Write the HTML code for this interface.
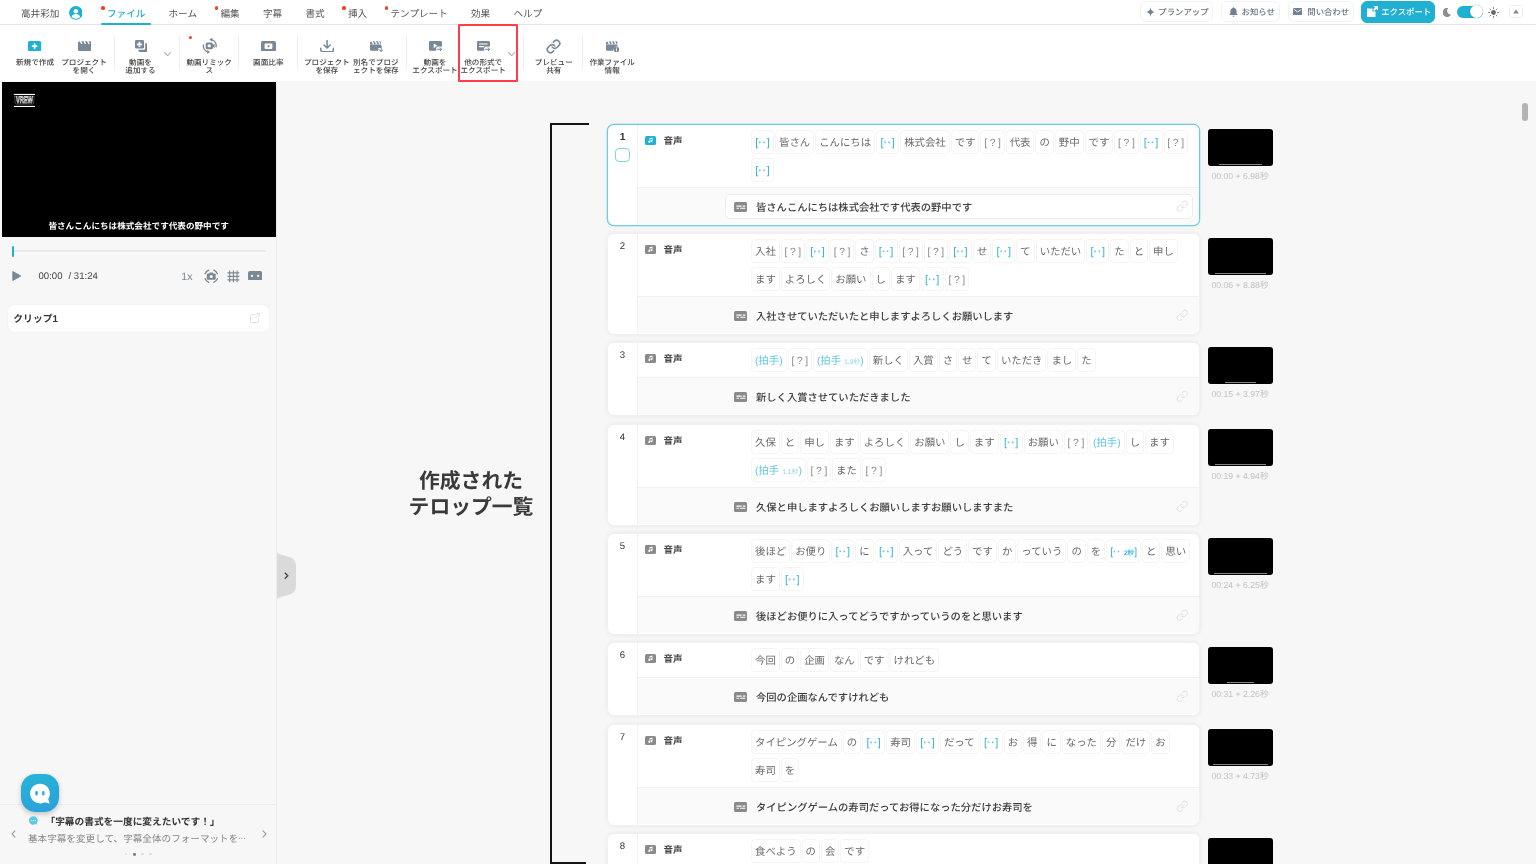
<!DOCTYPE html>
<html lang="ja">
<head>
<meta charset="utf-8">
<title>Vrew</title>
<style>
*{box-sizing:border-box;margin:0;padding:0}
html,body{width:1536px;height:864px;overflow:hidden;background:#f7f7f7}
body{font-family:"Liberation Sans","Noto Sans CJK JP",sans-serif;color:#333;position:relative;font-size:10px;text-rendering:geometricPrecision}
#app{position:absolute;left:0;top:0;width:1536px;height:864px;will-change:transform}
.abs{position:absolute}
/* ---------- menu bar ---------- */
#menubar{position:absolute;left:0;top:0;width:1536px;height:25px;background:#fff;border-bottom:1px solid #e4e4e4}
#menubar .mi{position:absolute;top:2px;height:24px;line-height:25.8px;font-size:9.6px;color:#555;white-space:nowrap}
#menubar .mi.act{color:#1fb0d2;font-weight:500}
#menubar .dot{position:absolute;width:3.7px;height:3.7px;border-radius:50%;background:#f23f26;top:6px}
#menubar .ul{position:absolute;left:101px;top:23.4px;width:50px;height:1.7px;background:#1fb0d2;border-radius:1px}
.tbtn{position:absolute;top:1px;height:21px;border:1px solid #f2f2f2;border-radius:6px;background:#fff;font-size:8.4px;color:#6a757e;font-weight:500;line-height:20.6px;white-space:nowrap}
.tbtn span{position:absolute;top:0}
/* ---------- toolbar ---------- */
#toolbar{position:absolute;left:0;top:25px;width:1536px;height:56px;background:#fff}
.tl{position:absolute;top:34.3px;font-size:7.6px;line-height:8px;color:#444;font-weight:500;text-align:center;white-space:nowrap;transform:translateX(-50%)}
.tsep{position:absolute;top:11.4px;width:1px;height:34px;background:#efefef}
.ticon{position:absolute}
/* ---------- left panel ---------- */
#left{position:absolute;left:0;top:81px;width:277px;height:783px;background:#f7f7f7;border-right:1px solid #ececec}
/* ---------- cards ---------- */
.card{position:absolute;left:607px;width:593px;background:#fff;border:1px solid #f0f0f0;border-radius:7px;box-shadow:0 0 5px rgba(0,0,0,.07);overflow:hidden}
.card.sel{border-color:#6ccbe1;box-shadow:0 0 0 .25px #6ccbe1,0 0 5px rgba(0,0,0,.05)}
.card .num{position:absolute;left:0;top:0;width:30px;bottom:0;border-right:1px solid #f2f2f2;text-align:center;font-size:9.6px;color:#333;padding-top:7.1px;line-height:12px}
.card .words{margin-left:30px;padding:5px 0 0 113px;background:#fff;position:relative}
.card .sub{margin-left:30px;height:37px;background:#fafafa;border-top:1px solid #f1f1f1;position:relative}
.card .aud{position:absolute;left:7.2px;top:11px;width:11px;height:9px;background:#8a8a8a;border-radius:1.5px}
.card.sel .aud{background:#1fb0d2}
.card .aul{position:absolute;left:25.6px;top:8.5px;font-size:9.5px;line-height:16px;color:#484848;font-weight:700}
.chips{font-size:0;line-height:0}
.c{display:inline-block;height:24px;line-height:25px;font-size:10.4px;color:#6a6a6a;border:1px solid #f5f5f5;border-radius:4px;padding:0 3px;margin:0 1px 4px 0;vertical-align:top;white-space:nowrap;background:#fff;text-align:center}
.c.q{color:#8a8a8a;width:24.2px;padding:0;letter-spacing:2.6px;text-indent:2.6px}
.c.s{color:#2fb4d3;width:23px;padding:0;font-size:11px;line-height:25.4px}
.c.s i,.c.sx i{font-style:normal;color:#74c6dc;letter-spacing:.5px;font-weight:700}
.c.sx{color:#2fb4d3}
.c.p{color:#62c8e0}
.c small{font-size:6.8px;font-weight:400;color:#8fd6e8}
.c.sx small{font-weight:700;color:#3fb9d6;font-size:6.6px}
.sub .sic{position:absolute;left:95.6px;top:13.8px;width:13.8px;height:9.8px;background:#8a8a8a;border-radius:1.5px}
.sub .st{position:absolute;left:118px;top:2.6px;line-height:36px;font-size:10.3px;color:#3c3c3c;font-weight:500;white-space:nowrap}
.sub .lk{position:absolute;right:10.5px;top:11.5px;width:12.5px;height:12.5px}
.thumb{position:absolute;left:1207.5px;width:65.8px;height:37px;background:#000;border-radius:3px}
.thumb b{position:absolute;bottom:1.5px;height:1px;background:#858585}
.ttime{position:absolute;left:1190px;width:100px;text-align:center;font-size:8.7px;color:#c2c2c2;line-height:10px;white-space:nowrap}
</style>
</head>
<body>
<div id="app">
<!-- ================= MENU BAR ================= -->
<div id="menubar">
  <div class="mi" style="left:21px">高井彩加</div>
  <svg class="abs" style="left:68.5px;top:6.2px" width="13.7" height="13.7" viewBox="0 0 14 14"><circle cx="7" cy="7" r="7" fill="#1fb0d2"/><circle cx="7" cy="5.3" r="2.3" fill="#fff"/><path d="M2.6 11.2c.6-2 2.3-2.9 4.4-2.9s3.8.9 4.4 2.9A6 6 0 0 1 7 13a6 6 0 0 1-4.4-1.8z" fill="#fff"/></svg>
  <div class="dot" style="left:101px"></div>
  <div class="mi act" style="left:107px">ファイル</div>
  <div class="ul"></div>
  <div class="mi" style="left:168.5px">ホーム</div>
  <div class="dot" style="left:214.5px"></div>
  <div class="mi" style="left:220.5px">編集</div>
  <div class="mi" style="left:263px">字幕</div>
  <div class="mi" style="left:305.5px">書式</div>
  <div class="dot" style="left:342px"></div>
  <div class="mi" style="left:348px">挿入</div>
  <div class="dot" style="left:384.5px"></div>
  <div class="mi" style="left:390.5px">テンプレート</div>
  <div class="mi" style="left:471px">効果</div>
  <div class="mi" style="left:513.5px">ヘルプ</div>

  <div class="tbtn" style="left:1140.3px;width:72.7px">
    <svg class="abs" style="left:5px;top:4.5px" width="9" height="10" viewBox="0 0 9 10"><path d="M4.5 0C4.9 3 5.6 4.2 9 5 5.6 5.8 4.9 7 4.5 10 4.1 7 3.4 5.8 0 5 3.4 4.2 4.1 3 4.5 0z" fill="#718190"/></svg>
    <span style="left:17px">プランアップ</span></div>
  <div class="tbtn" style="left:1220.5px;width:59px">
    <svg class="abs" style="left:7px;top:4.5px" width="9" height="10" viewBox="0 0 9 10"><path d="M4.5 0.3c.5 0 .8.3.8.7 1.5.400 2.3 1.6 2.3 3.2v2.3l1 1.1v.5H.4v-.5l1-1.1V4.2c0-1.6.8-2.8 2.3-3.2 0-.4.3-.7.8-.7zM3.5 8.7h2a1 1 0 0 1-2 0z" fill="#718190"/></svg>
    <span style="left:20.1px">お知らせ</span></div>
  <div class="tbtn" style="left:1287.5px;width:66px">
    <svg class="abs" style="left:4.5px;top:5.8px" width="9.4" height="7.2" viewBox="0 0 9 7"><rect width="9" height="7" rx="1" fill="#718190"/><path d="M1 1.5l3.5 2.3L8 1.5" stroke="#fff" stroke-width=".9" fill="none"/></svg>
    <span style="left:18.8px">問い合わせ</span></div>
  <div class="tbtn" style="left:1361px;width:73.5px;top:0.5px;height:22px;background:#1fb0d2;border-color:#1fb0d2;color:#fff;line-height:21.6px">
    <svg class="abs" style="left:5px;top:4.5px" width="11" height="11" viewBox="0 0 11 11"><path d="M0 2.5h5.5v3h3V11H0z" fill="#fff"/><path d="M6.5 0H11v4.5L9.4 2.9 7.3 5 6 3.7l2.1-2.1z" fill="#fff"/></svg>
    <span style="left:19.2px">エクスポート</span></div>
  <svg class="abs" style="left:1443px;top:7.5px" width="8" height="9" viewBox="0 0 8 9"><path d="M5.3 0A4.5 4.5 0 1 0 8 6.8 4 4 0 0 1 5.3 0z" fill="#8c8c8c"/></svg>
  <div class="abs" style="left:1456.5px;top:5.5px;width:26.5px;height:12px;border-radius:6px;background:#1fb0d2"></div>
  <div class="abs" style="left:1470px;top:5px;width:13px;height:13px;border-radius:50%;background:#fff;box-shadow:0 0 1.5px rgba(0,0,0,.35)"></div>
  <svg class="abs" style="left:1488px;top:6.5px" width="11" height="11" viewBox="0 0 11 11"><circle cx="5.5" cy="5.5" r="2.4" fill="#666"/><g stroke="#666" stroke-width=".9" stroke-linecap="round"><path d="M5.5.6v.9M5.5 9.5v.9M.6 5.5h.9M9.5 5.5h.9M2 2l.6.6M8.4 8.4l.6.6M2 9l.6-.600M8.4 2.6L9 2"/></g></svg>
  <div class="abs" style="left:1509px;top:5px;width:13.5px;height:13px;border:1px solid #f0f0f0;border-radius:2px;background:#fff"></div>
  <svg class="abs" style="left:1513px;top:9px" width="6" height="5" viewBox="0 0 6 5"><path d="M3 .5L5.8 4.5H.2z" fill="#7a8894"/></svg>
</div>
<!-- ================= TOOLBAR ================= -->
<div id="toolbar">
  <!-- 1 new -->
  <svg class="ticon" style="left:28.4px;top:15.8px" width="13.2" height="10.3" viewBox="0 0 13.2 10.3"><rect width="13.2" height="10.3" rx="1.6" fill="#1fb0d2"/><path d="M6.6 3.2v3.9M4.65 5.15h3.9" stroke="#fff" stroke-width="1.8" stroke-linecap="round"/></svg>
  <div class="tl" style="left:35px">新規で作成</div>
  <!-- 2 open -->
  <svg class="ticon" style="left:78px;top:16px" width="13.2" height="10" viewBox="0 0 13.2 10"><path d="M0 3h13.2v5.8a1.2 1.2 0 0 1-1.2 1.2H1.2A1.2 1.2 0 0 1 0 8.8z" fill="#788896"/><path d="M0 3.2V1.5L1.7.2l1.5 3zM3.3.2h2.1l1.5 3H4.8zM6.9.2H9l1.5 3H8.4zM10.5.2H12a1.2 1.2 0 0 1 1.2 1.2v1.8h-1.2z" fill="#788896"/></svg>
  <div class="tl" style="left:84px">プロジェクト<br>を開く</div>
  <div class="tsep" style="left:113.8px"></div>
  <!-- 3 add video -->
  <svg class="ticon" style="left:134.5px;top:15px" width="12.6" height="12" viewBox="0 0 12.6 12"><rect x="0" y="0" width="9" height="8.6" rx="1.4" fill="#788896"/><path d="M4.5 1.7v5.2M1.9 4.3h5.2" stroke="#fff" stroke-width="1.7"/><path d="M10.2 3.2h.9a1.5 1.5 0 0 1 1.5 1.5v5.8a1.5 1.5 0 0 1-1.5 1.5H5a1.5 1.5 0 0 1-1.5-1.5v-.7h5.2a1.5 1.5 0 0 0 1.5-1.5z" fill="#788896"/></svg>
  <div class="tl" style="left:140.5px">動画を<br>追加する</div>
  <svg class="ticon" style="left:163.8px;top:26.5px" width="7.2" height="4.4" viewBox="0 0 7.2 4.4"><path d="M.6.6l3 3 3-3" stroke="#b9b9b9" stroke-width="1.3" fill="none" stroke-linecap="round" stroke-linejoin="round"/></svg>
  <div class="tsep" style="left:179px"></div>
  <!-- 4 remix -->
  <div class="abs" style="left:188.5px;top:10.5px;width:3.6px;height:3.6px;border-radius:50%;background:#f23f26"></div>
  <svg class="ticon" style="left:201.5px;top:13px" width="15.5" height="15.5" viewBox="0 0 15.5 15.5"><rect x="3.7" y="4.4" width="7.2" height="6.8" rx="1.5" fill="#788896"/><path d="M10 7.2l2.6-1.5v4.3L10 8.5z" fill="#788896"/><rect x="5.7" y="6.4" width="3" height="2.8" rx=".6" fill="#fff"/><path d="M9.41 1.57A6.4 6.4 0 0 1 14.09 8.64" stroke="#788896" stroke-width="1.4" fill="none" stroke-linecap="round"/><path d="M6.09 13.93A6.4 6.4 0 0 1 1.41 6.86" stroke="#788896" stroke-width="1.4" fill="none" stroke-linecap="round"/><path d="M10.3 -.3L7.3 1.5l3 1.9z" fill="#788896"/><path d="M5.2 15.8l3-1.8-3-1.9z" fill="#788896"/></svg>
  <div class="tl" style="left:209.2px">動画リミック<br>ス</div>
  <div class="tsep" style="left:238px"></div>
  <!-- 5 aspect -->
  <svg class="ticon" style="left:260.8px;top:15.5px" width="15" height="10.6" viewBox="0 0 15 10.6"><rect width="15" height="10.6" rx="1.8" fill="#788896"/><rect x="3.6" y="2.6" width="7.8" height="5.4" rx="1.2" fill="#fff"/><circle cx="7.5" cy="5.3" r="1.1" fill="#788896"/></svg>
  <div class="tl" style="left:268.3px">画面比率</div>
  <div class="tsep" style="left:297.3px"></div>
  <!-- 6 save -->
  <svg class="ticon" style="left:320px;top:14.5px" width="14.2" height="12.4" viewBox="0 0 14.2 12.4"><path d="M7.1.5v7.2M4 5l3.1 3L10.2 5" stroke="#788896" stroke-width="1.5" fill="none" stroke-linecap="round" stroke-linejoin="round"/><path d="M.8 8.3v1.7a1.7 1.7 0 0 0 1.7 1.7h9.2a1.7 1.7 0 0 0 1.7-1.7V8.3" stroke="#788896" stroke-width="1.5" fill="none" stroke-linecap="round"/></svg>
  <div class="tl" style="left:326.8px">プロジェクト<br>を保存</div>
  <!-- 7 save as -->
  <svg class="ticon" style="left:369.8px;top:15.5px" width="13.4" height="11.4" viewBox="0 0 13.4 11.4"><path d="M0 3.6h11v3.3H8.3v2.9H1.2A1.2 1.2 0 0 1 0 8.6z" fill="#788896"/><path d="M0 3.2V1.6L1.3.3l1.5 2.9zM2.8.3h1.7L6 3.2H4.3zM6 .3h1.7l1.5 2.9H7.5zM9.2.3h.7A1.1 1.1 0 0 1 11 1.4v1.8h-.3z" fill="#788896"/><path d="M11.2 5v5.3M9.4 8.7l1.8 1.9 1.8-1.9" stroke="#788896" stroke-width="1" fill="none" stroke-linecap="round" stroke-linejoin="round"/></svg>
  <div class="tl" style="left:375.8px">別名でプロジ<br>ェクトを保存</div>
  <div class="tsep" style="left:406px"></div>
  <!-- 8 export video -->
  <svg class="ticon" style="left:429px;top:15.6px" width="13.4" height="10.8" viewBox="0 0 13.4 10.8"><path d="M1.4 0h10.2A1.4 1.4 0 0 1 13 1.4v4.2H8.6L7 7.3v2.5H1.4A1.4 1.4 0 0 1 0 8.4v-7A1.4 1.4 0 0 1 1.4 0z" fill="#788896"/><path d="M4.7 2.4l3.6 2.4-3.6 2.4z" fill="#fff"/><path d="M8 8.3h4.6M10.8 6.4l1.9 1.9-1.9 1.9" stroke="#788896" stroke-width="1" fill="none" stroke-linecap="round" stroke-linejoin="round"/></svg>
  <div class="tl" style="left:435px">動画を<br>エクスポート</div>
  <!-- 9 export other -->
  <svg class="ticon" style="left:477px;top:15.6px" width="13.4" height="10.8" viewBox="0 0 13.4 10.8"><path d="M1.4 0h10.2A1.4 1.4 0 0 1 13 1.4v4.2H8.6L7 7.3v2.5H1.4A1.4 1.4 0 0 1 0 8.4v-7A1.4 1.4 0 0 1 1.4 0z" fill="#788896"/><path d="M2.5 3h7.6M2.5 5.6h4.3" stroke="#fff" stroke-width="1.2" stroke-linecap="round"/><path d="M8 8.3h4.6M10.8 6.4l1.9 1.9-1.9 1.9" stroke="#788896" stroke-width="1" fill="none" stroke-linecap="round" stroke-linejoin="round"/></svg>
  <div class="tl" style="left:483.2px">他の形式で<br>エクスポート</div>
  <svg class="ticon" style="left:508px;top:26.5px" width="7.2" height="4.4" viewBox="0 0 7.2 4.4"><path d="M.6.6l3 3 3-3" stroke="#b9b9b9" stroke-width="1.3" fill="none" stroke-linecap="round" stroke-linejoin="round"/></svg>
  <div class="tsep" style="left:523.2px"></div>
  <!-- 10 link -->
  <svg class="ticon" style="left:545.8px;top:13.8px" width="15" height="15" viewBox="0 0 24 24"><g fill="none" stroke="#788896" stroke-width="2.5" stroke-linecap="round" stroke-linejoin="round"><path d="M10 13a5 5 0 0 0 7.54.540l3-3a5 5 0 0 0-7.07-7.07l-1.72 1.71"/><path d="M14 11a5 5 0 0 0-7.54-.540l-3 3a5 5 0 0 0 7.07 7.07l1.71-1.71"/></g></svg>
  <div class="tl" style="left:553.8px">プレビュー<br>共有</div>
  <div class="tsep" style="left:582.3px"></div>
  <!-- 11 info -->
  <svg class="ticon" style="left:605.8px;top:15.5px" width="13.4" height="11.4" viewBox="0 0 13.4 11.4"><path d="M0 3.6h11.4v2.1a3.3 3.3 0 0 0-3.9 4.1H1.2A1.2 1.2 0 0 1 0 8.6z" fill="#788896"/><path d="M0 3.2V1.6L1.3.3l1.5 2.9zM2.8.3h1.7L6 3.2H4.3zM6 .3h1.7l1.5 2.9H7.5zM9.2.3h1a1.2 1.2 0 0 1 1.2 1.2v1.7h-.7z" fill="#788896"/><circle cx="10.5" cy="8.5" r="2.7" fill="#788896"/><path d="M10.5 8.2v1.7M10.5 6.9v.3" stroke="#fff" stroke-width=".9" stroke-linecap="round"/></svg>
  <div class="tl" style="left:612.2px">作業ファイル<br>情報</div>
  <!-- highlight -->
  <div class="abs" style="left:458px;top:-1.2px;width:60px;height:58px;border:2px solid #ff3d4a;border-radius:1px"></div>
</div>
<!-- ================= LEFT PANEL ================= -->
<div id="left">
  <div class="abs" style="left:1.5px;top:1.2px;width:274.3px;height:155.3px;background:#000"></div>
  <svg class="abs" style="left:13px;top:11px" width="24" height="16" viewBox="0 0 24 16"><rect x=".8" y="1.9" width="21.2" height="1.1" fill="#fff"/><rect x=".8" y="13.9" width="21.2" height="1.1" fill="#fff"/><path d="M1.6 4.2H21.2L20.6 11.3Q20.5 12.1 19.7 12.1H3.1Q2.3 12.1 2.2 11.3z" fill="none" stroke="#999" stroke-width=".45"/><text x="2.9" y="11.4" font-family="Liberation Sans, sans-serif" font-weight="700" font-size="9.2" textLength="17" lengthAdjust="spacingAndGlyphs" fill="#000" stroke="#fff" stroke-width=".7">VREW</text></svg>
  <div class="abs" style="left:1.5px;top:138px;width:274.3px;text-align:center;color:#fff;font-weight:700;font-size:8.6px;line-height:14px;white-space:nowrap">皆さんこんにちは株式会社です代表の野中です</div>
  <!-- progress -->
  <div class="abs" style="left:13px;top:169.2px;width:253px;height:1.6px;background:#e9e9e9"></div>
  <div class="abs" style="left:11.7px;top:164.5px;width:2.7px;height:11px;background:#1fb0d2;border-radius:1px"></div>
  <!-- controls -->
  <svg class="abs" style="left:12px;top:189.5px" width="9.5" height="10" viewBox="0 0 9.5 11" preserveAspectRatio="none"><path d="M.8.6l8 4.9-8 4.9z" fill="#7a8894" stroke="#7a8894" stroke-width="1" stroke-linejoin="round"/></svg>
  <div class="abs" style="left:38.5px;top:189.2px;font-size:9.6px;line-height:14px;color:#444;white-space:nowrap">00:00</div>
  <div class="abs" style="left:68.5px;top:189.2px;font-size:9.6px;line-height:14px;color:#444;white-space:nowrap">/ 31:24</div>
  <div class="abs" style="left:181.3px;top:189.3px;font-size:10.6px;line-height:14px;color:#7a8894;white-space:nowrap">1x</div>
  <svg class="abs" style="left:204px;top:187.5px" width="14.5" height="14.5" viewBox="0 0 14.5 14.5"><path d="M13.37 9.72A6.6 6.6 0 0 1 9.72 13.37 M4.78 13.37A6.6 6.6 0 0 1 1.13 9.72 M1.13 4.78A6.6 6.6 0 0 1 4.78 1.13 M9.72 1.13A6.6 6.6 0 0 1 13.37 4.78" fill="none" stroke="#7a8894" stroke-width="1.3" stroke-linecap="round"/><path d="M5.8 3.5h2.9l.7 1h1.3a1 1 0 0 1 1 1v4.2a1 1 0 0 1-1 1H3.8a1 1 0 0 1-1-1V5.5a1 1 0 0 1 1-1h1.3z" fill="#7a8894"/><circle cx="7.25" cy="7.5" r="1.6" fill="#f7f7f7"/></svg>
  <svg class="abs" style="left:226.8px;top:188.8px" width="12.8" height="12.8" viewBox="0 0 12.8 12.8"><path d="M2.7 .5v11.8M6.4 .5v11.8M10.1 .5v11.8M.5 2.9h11.8M.5 6.4h11.8M.5 9.9h11.8" stroke="#7a8894" stroke-width="1.1"/></svg>
  <svg class="abs" style="left:248px;top:189.7px" width="14.2" height="9.6" viewBox="0 0 14.2 9.6"><rect width="14.2" height="9.6" rx="2" fill="#7a8894"/><circle cx="4" cy="4.9" r="1.15" fill="#f7f7f7"/><circle cx="10.2" cy="4.9" r="1.15" fill="#f7f7f7"/></svg>
  <!-- clip card -->
  <div class="abs" style="left:8px;top:223.5px;width:261px;height:27px;background:#fff;border-radius:7px;box-shadow:0 0 2px rgba(0,0,0,.05)"></div>
  <div class="abs" style="left:13.3px;top:232px;font-size:9.8px;font-weight:700;line-height:14px;color:#333;white-space:nowrap">クリップ1</div>
  <svg class="abs" style="left:249.5px;top:232px" width="10.5" height="10" viewBox="0 0 10.5 10"><path d="M5 1.5H1.5a1 1 0 0 0-1 1v6a1 1 0 0 0 1 1h6a1 1 0 0 0 1-1V5.5M6.5.5H10V4M10 .5L5.5 5" fill="none" stroke="#dcdcdc" stroke-width=".9"/></svg>
  <!-- bottom tip -->
  <div class="abs" style="left:0;top:722.7px;width:276px;height:1px;background:#ececec"></div>
  <div class="abs" style="left:20.6px;top:693.3px;width:38.4px;height:37.6px;border-radius:14.5px;background:linear-gradient(160deg,#29b2d8 10%,#2aa0da 95%);box-shadow:0 2px 5px rgba(0,0,0,.22)"></div>
  <svg class="abs" style="left:27.5px;top:700.5px" width="24" height="24" viewBox="0 0 24 24"><path d="M12 1.8c5.5 0 9.9 4.3 9.9 9.8 0 2-.6 3.9-1.7 5.5l1.5 4.6-4.9-1.5a10 10 0 0 1-4.8 1.2c-5.5 0-9.9-4.3-9.9-9.8S6.5 1.8 12 1.8z" fill="#fff"/><rect x="7.4" y="9" width="2.3" height="4.6" rx="1.15" fill="#2aa6d8"/><rect x="14.2" y="9" width="2.3" height="4.6" rx="1.15" fill="#2aa6d8"/></svg>
  <svg class="abs" style="left:29px;top:734.5px" width="9" height="9" viewBox="0 0 9 9"><path d="M4.5.3a4.1 4.1 0 0 1 3.3 6.6l.6 1.7-1.9-.6A4.2 4.2 0 1 1 4.5.3z" fill="#5cc8e2"/><circle cx="2.8" cy="4.5" r=".55" fill="#fff"/><circle cx="4.5" cy="4.5" r=".55" fill="#fff"/><circle cx="6.2" cy="4.5" r=".55" fill="#fff"/></svg>
  <div class="abs" style="left:45.5px;top:735.3px;font-size:9.7px;font-weight:700;line-height:14px;color:#333;white-space:nowrap">「字幕の書式を一度に変えたいです！」</div>
  <div class="abs" style="left:28px;top:749.8px;font-size:9.6px;line-height:14px;color:#888;white-space:nowrap">基本字幕を変更して、字幕全体のフォーマットを<span style="display:inline-block;width:9px;transform:scaleX(.8);transform-origin:0 50%;font-family:'Noto Sans CJK JP',sans-serif">…</span></div>
  <svg class="abs" style="left:10.5px;top:749px" width="5" height="8" viewBox="0 0 5 8"><path d="M4.2.7L1 4l3.2 3.3" stroke="#999" stroke-width="1.1" fill="none"/></svg>
  <svg class="abs" style="left:261.5px;top:749px" width="5" height="8" viewBox="0 0 5 8"><path d="M.8.7L4 4 .8 7.3" stroke="#999" stroke-width="1.1" fill="none"/></svg>
  <div class="abs" style="left:125px;top:772px;width:2.4px;height:2.4px;border-radius:50%;background:#ddd"></div>
  <div class="abs" style="left:133px;top:771.8px;width:2.8px;height:2.8px;border-radius:50%;background:#777"></div>
  <div class="abs" style="left:141.2px;top:772px;width:2.4px;height:2.4px;border-radius:50%;background:#ddd"></div>
  <div class="abs" style="left:149.2px;top:772px;width:2.4px;height:2.4px;border-radius:50%;background:#ddd"></div>
</div>
<!-- collapse tab -->
<svg class="abs" style="left:277px;top:552px" width="19.5" height="47.5" viewBox="0 0 19.5 47.5"><path d="M0 0C1.5 5 19 1.5 19 13.5V34C19 46 1.5 42.5 0 47.5z" fill="#dadada"/><path d="M7.8 20.8L10.8 23.8 7.8 26.8" stroke="#444" stroke-width="1.3" fill="none"/></svg>
<!-- ================= BRACKET + LABEL ================= -->
<div class="abs" style="left:550px;top:123px;width:39px;height:760px;border-left:2px solid #151515;border-top:2px solid #151515"></div>
<div class="abs" style="left:550px;top:861.6px;width:36px;height:2.4px;background:#151515"></div>
<div class="abs" style="left:371px;top:468.8px;width:200px;text-align:center;font-size:20.8px;line-height:26.5px;font-weight:700;color:#3a3a3a;white-space:nowrap">作成された<br>テロップ一覧</div>
<!-- scrollbar -->
<div class="abs" style="left:1522px;top:103px;width:6px;height:17.5px;border-radius:3px;background:#b4b4b4"></div>
<!-- ================= CARDS ================= -->
<div class="card sel" style="top:124px;height:102px">
  <div class="num" style="font-weight:700;font-size:10.2px;padding-top:6.5px">1<div style="width:14.2px;height:14px;border:1.3px solid #84d6dc;border-radius:4px;margin:4.7px auto 0;background:#fff"></div></div>
  <div class="words" style="height:62px"><div class="aud"><svg width="11" height="9" viewBox="0 0 11 9" style="display:block"><path d="M4.5 2.3l3-.700v3.7a1 1 0 1 1-.7-.950V2.9l-1.6.400v2.7a1 1 0 1 1-.7-.950z" fill="#fff"/></svg></div><div class="aul">音声</div><div class="chips">
    <span class="c s">[<i>··</i>]</span><span class="c">皆さん</span><span class="c">こんにちは</span><span class="c s">[<i>··</i>]</span><span class="c">株式会社</span><span class="c">です</span><span class="c q">[?]</span><span class="c">代表</span><span class="c">の</span><span class="c">野中</span><span class="c">です</span><span class="c q">[?]</span><span class="c s">[<i>··</i>]</span><span class="c q">[?]</span><br>
    <span class="c s">[<i>··</i>]</span>
  </div></div>
  <div class="sub"><div class="abs" style="left:87px;top:5.5px;width:468px;height:25.5px;background:#fff;border:1px solid #ededed;border-radius:5px"></div><div class="sic"><svg width="13.8" height="9.8" viewBox="0 0 13 9.5" style="display:block"><path d="M2.2 4h5M8.4 4h2.4M2.2 6.1h2.4M5.8 6.1h5" stroke="#fff" stroke-width="1.1"/></svg></div><div class="st">皆さんこんにちは株式会社です代表の野中です</div><div class="lk"><svg width="12.5" height="12.5" viewBox="0 0 24 24"><g fill="none" stroke="#e0e0e0" stroke-width="1.9" stroke-linecap="round" stroke-linejoin="round"><path d="M10 13a5 5 0 0 0 7.54.540l3-3a5 5 0 0 0-7.07-7.07l-1.72 1.71"/><path d="M14 11a5 5 0 0 0-7.54-.540l-3 3a5 5 0 0 0 7.07 7.07l1.71-1.71"/></g></svg></div></div>
</div>
<div class="thumb" style="top:129px"><b style="left:11.2px;width:43.5px"></b></div>
<div class="ttime" style="top:170.5px">00:00 + 6.98秒</div>
<div class="card" style="top:233px;height:102px">
  <div class="num">2</div>
  <div class="words" style="height:62px"><div class="aud"><svg width="11" height="9" viewBox="0 0 11 9" style="display:block"><path d="M4.5 2.3l3-.700v3.7a1 1 0 1 1-.7-.950V2.9l-1.6.400v2.7a1 1 0 1 1-.7-.950z" fill="#fff"/></svg></div><div class="aul">音声</div><div class="chips">
    <span class="c">入社</span><span class="c q">[?]</span><span class="c s">[<i>··</i>]</span><span class="c q">[?]</span><span class="c">さ</span><span class="c s">[<i>··</i>]</span><span class="c q">[?]</span><span class="c q">[?]</span><span class="c s">[<i>··</i>]</span><span class="c">せ</span><span class="c s">[<i>··</i>]</span><span class="c">て</span><span class="c">いただい</span><span class="c s">[<i>··</i>]</span><span class="c">た</span><span class="c">と</span><span class="c">申し</span><br>
    <span class="c">ます</span><span class="c">よろしく</span><span class="c">お願い</span><span class="c">し</span><span class="c">ます</span><span class="c s">[<i>··</i>]</span><span class="c q">[?]</span>
  </div></div>
  <div class="sub"><div class="sic"><svg width="13.8" height="9.8" viewBox="0 0 13 9.5" style="display:block"><path d="M2.2 4h5M8.4 4h2.4M2.2 6.1h2.4M5.8 6.1h5" stroke="#fff" stroke-width="1.1"/></svg></div><div class="st">入社させていただいたと申しますよろしくお願いします</div><div class="lk"><svg width="12.5" height="12.5" viewBox="0 0 24 24"><g fill="none" stroke="#e0e0e0" stroke-width="1.9" stroke-linecap="round" stroke-linejoin="round"><path d="M10 13a5 5 0 0 0 7.54.540l3-3a5 5 0 0 0-7.07-7.07l-1.72 1.71"/><path d="M14 11a5 5 0 0 0-7.54-.540l-3 3a5 5 0 0 0 7.07 7.07l1.71-1.71"/></g></svg></div></div>
</div>
<div class="thumb" style="top:238px"><b style="left:7px;width:51.7px"></b></div>
<div class="ttime" style="top:279.5px">00:06 + 8.88秒</div>
<div class="card" style="top:342px;height:74px">
  <div class="num">3</div>
  <div class="words" style="height:34px"><div class="aud"><svg width="11" height="9" viewBox="0 0 11 9" style="display:block"><path d="M4.5 2.3l3-.700v3.7a1 1 0 1 1-.7-.950V2.9l-1.6.400v2.7a1 1 0 1 1-.7-.950z" fill="#fff"/></svg></div><div class="aul">音声</div><div class="chips">
    <span class="c p">(拍手)</span><span class="c q">[?]</span><span class="c p">(拍手 <small>1.9秒</small>)</span><span class="c">新しく</span><span class="c">入賞</span><span class="c">さ</span><span class="c">せ</span><span class="c">て</span><span class="c">いただき</span><span class="c">まし</span><span class="c">た</span>
  </div></div>
  <div class="sub"><div class="sic"><svg width="13.8" height="9.8" viewBox="0 0 13 9.5" style="display:block"><path d="M2.2 4h5M8.4 4h2.4M2.2 6.1h2.4M5.8 6.1h5" stroke="#fff" stroke-width="1.1"/></svg></div><div class="st">新しく入賞させていただきました</div><div class="lk"><svg width="12.5" height="12.5" viewBox="0 0 24 24"><g fill="none" stroke="#e0e0e0" stroke-width="1.9" stroke-linecap="round" stroke-linejoin="round"><path d="M10 13a5 5 0 0 0 7.54.540l3-3a5 5 0 0 0-7.07-7.07l-1.72 1.71"/><path d="M14 11a5 5 0 0 0-7.54-.540l-3 3a5 5 0 0 0 7.07 7.07l1.71-1.71"/></g></svg></div></div>
</div>
<div class="thumb" style="top:347px"><b style="left:17.4px;width:31px"></b></div>
<div class="ttime" style="top:388.5px">00:15 + 3.97秒</div>
<div class="card" style="top:424px;height:102px">
  <div class="num">4</div>
  <div class="words" style="height:62px"><div class="aud"><svg width="11" height="9" viewBox="0 0 11 9" style="display:block"><path d="M4.5 2.3l3-.700v3.7a1 1 0 1 1-.7-.950V2.9l-1.6.400v2.7a1 1 0 1 1-.7-.950z" fill="#fff"/></svg></div><div class="aul">音声</div><div class="chips">
    <span class="c">久保</span><span class="c">と</span><span class="c">申し</span><span class="c">ます</span><span class="c">よろしく</span><span class="c">お願い</span><span class="c">し</span><span class="c">ます</span><span class="c s">[<i>··</i>]</span><span class="c">お願い</span><span class="c q">[?]</span><span class="c p">(拍手)</span><span class="c">し</span><span class="c">ます</span><br>
    <span class="c p">(拍手 <small>1.1秒</small>)</span><span class="c q">[?]</span><span class="c">また</span><span class="c q">[?]</span>
  </div></div>
  <div class="sub"><div class="sic"><svg width="13.8" height="9.8" viewBox="0 0 13 9.5" style="display:block"><path d="M2.2 4h5M8.4 4h2.4M2.2 6.1h2.4M5.8 6.1h5" stroke="#fff" stroke-width="1.1"/></svg></div><div class="st">久保と申しますよろしくお願いしますお願いしますまた</div><div class="lk"><svg width="12.5" height="12.5" viewBox="0 0 24 24"><g fill="none" stroke="#e0e0e0" stroke-width="1.9" stroke-linecap="round" stroke-linejoin="round"><path d="M10 13a5 5 0 0 0 7.54.540l3-3a5 5 0 0 0-7.07-7.07l-1.72 1.71"/><path d="M14 11a5 5 0 0 0-7.54-.540l-3 3a5 5 0 0 0 7.07 7.07l1.71-1.71"/></g></svg></div></div>
</div>
<div class="thumb" style="top:429px"><b style="left:7px;width:51.7px"></b></div>
<div class="ttime" style="top:470.5px">00:19 + 4.94秒</div>
<div class="card" style="top:533px;height:102px">
  <div class="num">5</div>
  <div class="words" style="height:62px"><div class="aud"><svg width="11" height="9" viewBox="0 0 11 9" style="display:block"><path d="M4.5 2.3l3-.700v3.7a1 1 0 1 1-.7-.950V2.9l-1.6.400v2.7a1 1 0 1 1-.7-.950z" fill="#fff"/></svg></div><div class="aul">音声</div><div class="chips">
    <span class="c">後ほど</span><span class="c">お便り</span><span class="c s">[<i>··</i>]</span><span class="c">に</span><span class="c s">[<i>··</i>]</span><span class="c">入って</span><span class="c">どう</span><span class="c">です</span><span class="c">か</span><span class="c">っていう</span><span class="c">の</span><span class="c">を</span><span class="c sx">[<i>··</i> <small>2秒</small>]</span><span class="c">と</span><span class="c">思い</span><br>
    <span class="c">ます</span><span class="c s">[<i>··</i>]</span>
  </div></div>
  <div class="sub"><div class="sic"><svg width="13.8" height="9.8" viewBox="0 0 13 9.5" style="display:block"><path d="M2.2 4h5M8.4 4h2.4M2.2 6.1h2.4M5.8 6.1h5" stroke="#fff" stroke-width="1.1"/></svg></div><div class="st">後ほどお便りに入ってどうですかっていうのをと思います</div><div class="lk"><svg width="12.5" height="12.5" viewBox="0 0 24 24"><g fill="none" stroke="#e0e0e0" stroke-width="1.9" stroke-linecap="round" stroke-linejoin="round"><path d="M10 13a5 5 0 0 0 7.54.540l3-3a5 5 0 0 0-7.07-7.07l-1.72 1.71"/><path d="M14 11a5 5 0 0 0-7.54-.540l-3 3a5 5 0 0 0 7.07 7.07l1.71-1.71"/></g></svg></div></div>
</div>
<div class="thumb" style="top:538px"><b style="left:6px;width:53.8px"></b></div>
<div class="ttime" style="top:579.5px">00:24 + 6.25秒</div>
<div class="card" style="top:642px;height:74px">
  <div class="num">6</div>
  <div class="words" style="height:34px"><div class="aud"><svg width="11" height="9" viewBox="0 0 11 9" style="display:block"><path d="M4.5 2.3l3-.700v3.7a1 1 0 1 1-.7-.950V2.9l-1.6.400v2.7a1 1 0 1 1-.7-.950z" fill="#fff"/></svg></div><div class="aul">音声</div><div class="chips">
    <span class="c">今回</span><span class="c">の</span><span class="c">企画</span><span class="c">なん</span><span class="c">です</span><span class="c">けれども</span>
  </div></div>
  <div class="sub"><div class="sic"><svg width="13.8" height="9.8" viewBox="0 0 13 9.5" style="display:block"><path d="M2.2 4h5M8.4 4h2.4M2.2 6.1h2.4M5.8 6.1h5" stroke="#fff" stroke-width="1.1"/></svg></div><div class="st">今回の企画なんですけれども</div><div class="lk"><svg width="12.5" height="12.5" viewBox="0 0 24 24"><g fill="none" stroke="#e0e0e0" stroke-width="1.9" stroke-linecap="round" stroke-linejoin="round"><path d="M10 13a5 5 0 0 0 7.54.540l3-3a5 5 0 0 0-7.07-7.07l-1.72 1.71"/><path d="M14 11a5 5 0 0 0-7.54-.540l-3 3a5 5 0 0 0 7.07 7.07l1.71-1.71"/></g></svg></div></div>
</div>
<div class="thumb" style="top:647px"><b style="left:19.4px;width:26.9px"></b></div>
<div class="ttime" style="top:688.5px">00:31 + 2.26秒</div>
<div class="card" style="top:724px;height:102px">
  <div class="num">7</div>
  <div class="words" style="height:62px"><div class="aud"><svg width="11" height="9" viewBox="0 0 11 9" style="display:block"><path d="M4.5 2.3l3-.700v3.7a1 1 0 1 1-.7-.950V2.9l-1.6.400v2.7a1 1 0 1 1-.7-.950z" fill="#fff"/></svg></div><div class="aul">音声</div><div class="chips">
    <span class="c">タイピングゲーム</span><span class="c">の</span><span class="c s">[<i>··</i>]</span><span class="c">寿司</span><span class="c s">[<i>··</i>]</span><span class="c">だって</span><span class="c s">[<i>··</i>]</span><span class="c">お</span><span class="c">得</span><span class="c">に</span><span class="c">なった</span><span class="c">分</span><span class="c">だけ</span><span class="c">お</span><br>
    <span class="c">寿司</span><span class="c">を</span>
  </div></div>
  <div class="sub"><div class="sic"><svg width="13.8" height="9.8" viewBox="0 0 13 9.5" style="display:block"><path d="M2.2 4h5M8.4 4h2.4M2.2 6.1h2.4M5.8 6.1h5" stroke="#fff" stroke-width="1.1"/></svg></div><div class="st">タイピングゲームの寿司だってお得になった分だけお寿司を</div><div class="lk"><svg width="12.5" height="12.5" viewBox="0 0 24 24"><g fill="none" stroke="#e0e0e0" stroke-width="1.9" stroke-linecap="round" stroke-linejoin="round"><path d="M10 13a5 5 0 0 0 7.54.540l3-3a5 5 0 0 0-7.07-7.07l-1.72 1.71"/><path d="M14 11a5 5 0 0 0-7.54-.540l-3 3a5 5 0 0 0 7.07 7.07l1.71-1.71"/></g></svg></div></div>
</div>
<div class="thumb" style="top:729px"><b style="left:5px;width:55.9px"></b></div>
<div class="ttime" style="top:770.5px">00:33 + 4.73秒</div>
<div class="card" style="top:833px;height:60px">
  <div class="num">8</div>
  <div class="words" style="height:34px"><div class="aud"><svg width="11" height="9" viewBox="0 0 11 9" style="display:block"><path d="M4.5 2.3l3-.700v3.7a1 1 0 1 1-.7-.950V2.9l-1.6.400v2.7a1 1 0 1 1-.7-.950z" fill="#fff"/></svg></div><div class="aul">音声</div><div class="chips">
    <span class="c">食べよう</span><span class="c">の</span><span class="c">会</span><span class="c">です</span>
  </div></div>
</div>
<div class="thumb" style="top:838px"></div>
</div>
</body>
</html>
